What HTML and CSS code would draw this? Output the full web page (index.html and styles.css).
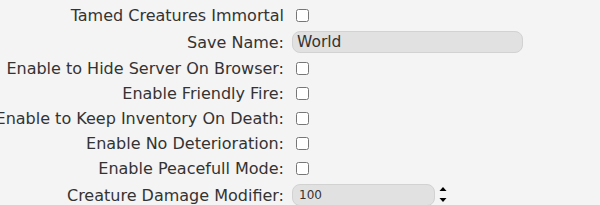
FILE: index.html
```html
<!DOCTYPE html>
<html>
<head>
<meta charset="utf-8">
<link rel="stylesheet" href="styles.css">
</head>
<body>
<div class="form">
  <div class="row"><label class="lbl">Tamed Creatures Immortal</label><div class="ctl"><input type="checkbox" class="cb"></div></div>
  <div class="row tall"><label class="lbl">Save Name:</label><div class="ctl"><input type="text" class="txt" value="World"></div></div>
  <div class="row"><label class="lbl">Enable to Hide Server On Browser:</label><div class="ctl"><input type="checkbox" class="cb"></div></div>
  <div class="row"><label class="lbl">Enable Friendly Fire:</label><div class="ctl"><input type="checkbox" class="cb"></div></div>
  <div class="row"><label class="lbl">Enable to Keep Inventory On Death:</label><div class="ctl"><input type="checkbox" class="cb"></div></div>
  <div class="row"><label class="lbl">Enable No Deterioration:</label><div class="ctl"><input type="checkbox" class="cb"></div></div>
  <div class="row"><label class="lbl">Enable Peacefull Mode:</label><div class="ctl"><input type="checkbox" class="cb"></div></div>
  <div class="row tall"><label class="lbl">Creature Damage Modifier:</label><div class="ctl"><input type="text" class="num" value="100"><svg class="spin" width="8" height="18" viewBox="0 0 8 18"><path d="M4 1 L7.5 5 L0.5 5 Z" fill="#000"/><path d="M0.5 12 L7.5 12 L4 16 Z" fill="#000"/></svg></div></div>
</div>
</body>
</html>
```
FILE: styles.css
```css
html, body {
  margin: 0;
  padding: 0;
  background: #f4f4f4;
  overflow: hidden;
}
body {
  font-family: "DejaVu Sans", sans-serif;
  font-size: 16px;
  color: #333;
  padding-top: 3px;
}
.form {
  display: flex;
  flex-direction: column;
}
.row {
  display: flex;
  align-items: center;
  height: 25px;
}
.row.tall {
  height: 28px;
}
.lbl {
  width: 284px;
  flex: none;
  display: flex;
  justify-content: flex-end;
  white-space: nowrap;
}
.ctl {
  margin-left: 8px;
  display: flex;
  align-items: center;
}
.cb {
  margin: 3px 3px 3px 4px;
  width: 13px;
  height: 13px;
}
.txt {
  box-sizing: border-box;
  width: 231px;
  height: 22px;
  border: 1px solid #d2d2d2;
  border-radius: 8px;
  background: #e1e1e1;
  font-family: "DejaVu Sans", sans-serif;
  font-size: 15.5px;
  color: #333;
  padding: 0 4px;
  margin: 0;
  outline: none;
}
.num {
  box-sizing: border-box;
  width: 143px;
  height: 22px;
  border: 1px solid #d2d2d2;
  border-radius: 8px;
  background: #e1e1e1;
  font-family: "DejaVu Sans", sans-serif;
  font-size: 12px;
  color: #333;
  padding: 0 6px;
  margin: 0;
  outline: none;
}
.spin {
  margin-left: 4px;
}
```
